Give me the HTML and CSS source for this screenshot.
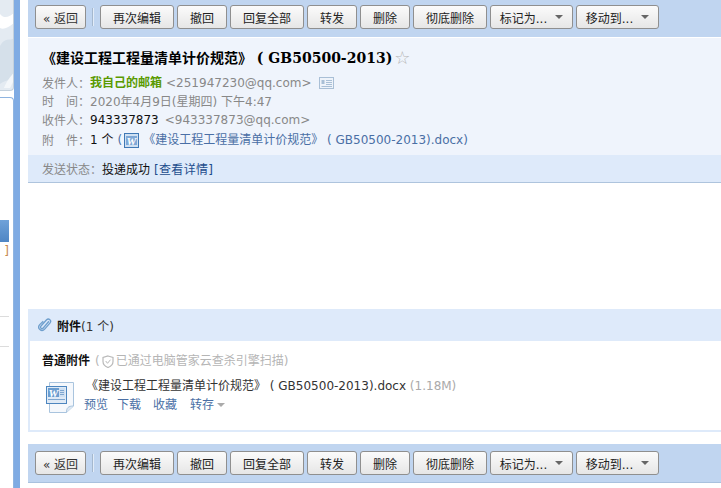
FILE: index.html
```html
<!DOCTYPE html>
<html lang="zh">
<head>
<meta charset="utf-8">
<title>邮件</title>
<link rel="stylesheet" href="styles.css">
</head>
<body>
<div class="page">
  <aside class="side">
    <div class="side-top">
      <svg class="swirl" width="14" height="91" viewBox="0 0 14 91"><path d="M0 14C5 20 10 16 14 13V23C9 27 4 30 0 28Z" fill="#fff"/><path d="M0 46C6 36 10 42 14 38V74C9 82 5 80 0 84Z" fill="#d5e0ea"/><path d="M14 72C10 78 7 80 4 88H10C12 84 13 82 14 80Z" fill="#f4f7fa"/></svg>
    </div>
    <div class="side-panel">
      <div class="side-active"></div>
      <div class="side-note">]</div>
      <div class="side-rule"></div>
      <div class="side-rule"></div>
    </div>
  </aside>
  <div class="divider"></div>
  <main class="main">
    <div class="toolbar top">
      <button class="btn back">« 返回</button><span class="sep"></span>
      <button class="btn w74">再次编辑</button><button class="btn w50">撤回</button><button class="btn w74">回复全部</button><button class="btn w50">转发</button><button class="btn w50">删除</button><button class="btn w74">彻底删除</button><button class="btn menu">标记为...<i class="caret"></i></button><button class="btn menu">移动到...<i class="caret"></i></button>
    </div>
    <section class="head">
      <h1 class="subject">《建设工程工程量清单计价规范》 ( GB50500-2013)<span class="star">☆</span></h1>
      <div class="row"><span class="lbl">发件人<span class="colon">：</span></span><b class="me">我自己的邮箱</b><span class="addr">&lt;251947230@qq.com&gt;</span>
        <svg class="card" width="15" height="12" viewBox="0 0 15 12"><rect x=".5" y=".5" width="14" height="11" fill="#eef3fa" stroke="#a9bfd6"/><rect x="2.500" y="3" width="3" height="4" fill="#a9bfd6"/><path d="M7 3.500h6M7 5.500h6M7 7.500h6M2.500 9.500h10.500" stroke="#a9bfd6"/></svg></div>
      <div class="row"><span class="lbl">时　间<span class="colon">：</span></span><span class="grey">2020年4月9日(星期四) 下午4:47</span></div>
      <div class="row"><span class="lbl">收件人<span class="colon">：</span></span><span class="dark">943337873</span><span class="addr">&lt;943337873@qq.com&gt;</span></div>
      <div class="row last"><span class="lbl">附　件<span class="colon">：</span></span><span class="dark">1 个</span><span class="link">(<svg class="wicon" width="15" height="15" viewBox="0 0 15 15"><rect x=".5" y=".5" width="14" height="14" fill="#cfe0f2" stroke="#3f78b5"/><rect x="2" y="3" width="11" height="9" fill="#7fa8d6"/><text x="7.500" y="11.500" class="wtext">W</text></svg>《建设工程工程量清单计价规范》 ( GB50500-2013).docx)</span></div>
    </section>
    <div class="status"><span class="lbl">发送状态<span class="colon">：</span></span><span class="ok">投递成功</span><span class="detail">[查看详情]</span></div>
    <div class="body"></div>
    <section class="att">
      <div class="att-head">
        <svg class="clip" width="14" height="16" viewBox="0 0 14 16"><path d="M11 4 5 11c-1.500 1.700-3.800-.2-2.400-2l5.700-6.300c2.500-2.700 6 .5 3.700 3.200l-5.500 6.300c-3.200 3.600-8.500-.8-5.200-4.700L5 4" fill="none" stroke="#6f9fcd" stroke-width="1.400" transform="translate(.5 .5) scale(.95)"/></svg>
        <b>附件</b><span>(1 个)</span>
      </div>
      <div class="att-box">
        <div class="att-kind"><b>普通附件</b><span class="scan">(<svg class="shield" width="12" height="13" viewBox="0 0 12 13"><path d="M6 1 11 2.500V6.500C11 9.500 8.500 11.500 6 12.500 3.500 11.500 1 9.500 1 6.500V2.500Z" fill="none" stroke="#b9b9b9" stroke-width="1.200"/><path d="M3.700 6 5.500 8.300 8.500 4.700" fill="none" stroke="#b9b9b9"/></svg>已通过电脑管家云查杀引擎扫描)</span></div>
        <div class="file">
          <svg class="fileicon" width="28" height="31" viewBox="0 0 28 31"><path d="M3.500 .5H27.500V24L20.500 30.500H3.500Z" fill="#f5f8fc" stroke="#a9c4de"/><path d="M20.500 30.500C20.500 26 22 24 27.500 24" fill="#dde8f3" stroke="#a9c4de"/><rect x=".5" y="4.500" width="20" height="17" fill="#dfeaf6" stroke="#4d86bf"/><rect x="2" y="6" width="17" height="9" fill="#cfe0f2"/><rect x="2" y="6" width="11" height="9" fill="#6b9dd0"/><text x="7.500" y="14.500" class="wbig">W</text><path d="M14 8.500H18M14 10.500H18M14 12.500H18M2 17.500H19" stroke="#7fa6cf"/></svg>
          <div class="file-info">
            <div class="fname">《建设工程工程量清单计价规范》 ( GB50500-2013).docx <span class="size">(1.18M)</span></div>
            <div class="actions"><a class="act a1">预览</a><a class="act a2">下载</a><a class="act a3">收藏</a><a class="act save">转存<i class="caret small"></i></a></div>
          </div>
        </div>
      </div>
    </section>
    <div class="toolbar bottom">
      <button class="btn back">« 返回</button><span class="sep"></span>
      <button class="btn w74">再次编辑</button><button class="btn w50">撤回</button><button class="btn w74">回复全部</button><button class="btn w50">转发</button><button class="btn w50">删除</button><button class="btn w74">彻底删除</button><button class="btn menu">标记为...<i class="caret"></i></button><button class="btn menu">移动到...<i class="caret"></i></button>
    </div>
  </main>
</div>
</body>
</html>
```
FILE: styles.css
```css
* { box-sizing: border-box; }
html, body { margin: 0; padding: 0; }
body { width: 721px; height: 488px; overflow: hidden; background: #fff; font-family: "DejaVu Sans", "Noto Sans CJK SC", sans-serif; font-size: 12px; color: #000; }
.page { display: flex; height: 488px; }
.side { width: 14px; display: flex; flex-direction: column; background: #fff; }
.side-top { height: 91px; background: #e4ebf2; border-right: 1px solid #c3d0dc; border-bottom: 1px solid #c3d0dc; border-bottom-right-radius: 4px; overflow: hidden; }
.swirl { display: block; }
.side-panel { flex: 1; margin-top: 6px; border-top: 1px solid #8fb4e0; border-right: 1px solid #8fb4e0; border-top-right-radius: 4px; padding-top: 122px; }
.side-active { height: 22px; width: 9px; background: linear-gradient(#6fa2d9, #4f86c4); }
.side-note { height: 74px; width: 9px; font-size: 12px; line-height: 18px; color: #c88a50; text-align: right; overflow: hidden; }
.side-rule { width: 9px; height: 1px; background: #dcdcdc; margin-bottom: 29px; }
.divider { width: 6px; background: #7fabe3; margin-right: 8px; }
.main { width: 693px; display: flex; flex-direction: column; }
.toolbar { display: flex; align-items: center; background: #c0d5f0; padding-left: 7px; }
.toolbar.top { height: 37px; padding-bottom: 3px; }
.toolbar.bottom { height: 39px; margin-top: 12px; border-bottom: 1px solid #a9c1de; }
.btn { height: 24px; margin: 0; padding: 0; border: 1px solid #8f8f8f; border-radius: 3px; background: linear-gradient(#fbfbfb, #e6e6e6); font-family: inherit; font-size: 12px; color: #222; display: inline-flex; align-items: center; justify-content: center; }
.back { width: 51px; color: #333; }
.sep { width: 1px; height: 18px; background: #a5b8ce; margin: 0 7px 0 6px; box-shadow: 1px 0 0 #e2ecf8; }
.w74 { width: 74px; margin-right: 3px; }
.w50 { width: 50px; margin-right: 3px; }
.menu { width: 83px; margin-right: 3px; }
.caret { display: inline-block; width: 0; height: 0; border: 4px solid transparent; border-top: 4px solid #666; border-bottom: 0; margin-left: 8px; }
.caret.small { border-top-color: #aaa; margin-left: 3px; }
.head { background: #eff4fc; border-top: 1px solid #fff; height: 118px; padding: 10px 0 0 14px; }
.subject { margin: 0 0 6px; font-family: "DejaVu Serif", "Noto Sans CJK SC", serif; font-size: 14px; line-height: 20px; height: 20px; font-weight: bold; white-space: pre; display: flex; align-items: center; }
.star { font-size: 18px; font-weight: normal; color: #b5b5b5; margin-left: 2px; font-family: "DejaVu Sans", sans-serif; }
.row { height: 18.6px; line-height: 18px; white-space: nowrap; display: flex; align-items: center; }
.row.last { margin-top: 1px; }
.lbl { color: #888; }
.colon { font-family: "Noto Sans CJK TC", sans-serif; }
.me { color: #5a9a00; }
.addr { color: #888; margin-left: 6px; }
.me + .addr { margin-left: 4px; }
.grey { color: #888; }
.dark { color: #111; }
.link { color: #4a6fa5; margin-left: 4px; white-space: pre; display: flex; align-items: center; }
.card { margin-left: 7px; }
.wicon { margin: 0 4px 0 2px; }
.wtext { font: italic bold 11px "Liberation Serif", serif; fill: #fff; text-anchor: middle; }
.wbig { font: italic bold 11px "Liberation Serif", serif; fill: #fff; text-anchor: middle; }
.status { background: #deeafa; height: 28px; border-bottom: 1px solid #aec4dd; padding-left: 14px; display: flex; align-items: center; white-space: pre; }
.ok { color: #111; }
.detail { color: #1d4d8c; margin-left: 4px; letter-spacing: .3px; }
.body { height: 126px; }
.att { height: 123px; background: #deeafa; padding: 0 0 2px 2px; display: flex; flex-direction: column; }
.att-head { height: 32px; padding-left: 8px; display: flex; align-items: center; color: #333; }
.att-head b { margin-left: 5px; color: #111; }
.clip { display: block; }
.att-box { flex: 1; background: #fff; padding: 10px 0 0 12px; }
.att-kind { height: 20px; line-height: 20px; color: #111; white-space: nowrap; display: flex; align-items: center; }
.scan { color: #b5b5b5; margin-left: 5px; display: flex; align-items: center; }
.shield { margin: 0 2px; }
.file { display: flex; margin-top: 6px; }
.fileicon { margin: 5px 0 0 4px; flex: none; }
.file-info { margin-left: 10px; }
.fname { height: 19px; line-height: 19px; color: #333; white-space: nowrap; padding-left: 2px; }
.size { color: #aaa; }
.actions { display: flex; height: 18px; line-height: 18px; color: #4a6fa5; }
.a1 { margin-right: 9px; }
.a2 { margin-right: 12px; }
.a3 { margin-right: 13px; }
.save { display: flex; align-items: center; }
```
